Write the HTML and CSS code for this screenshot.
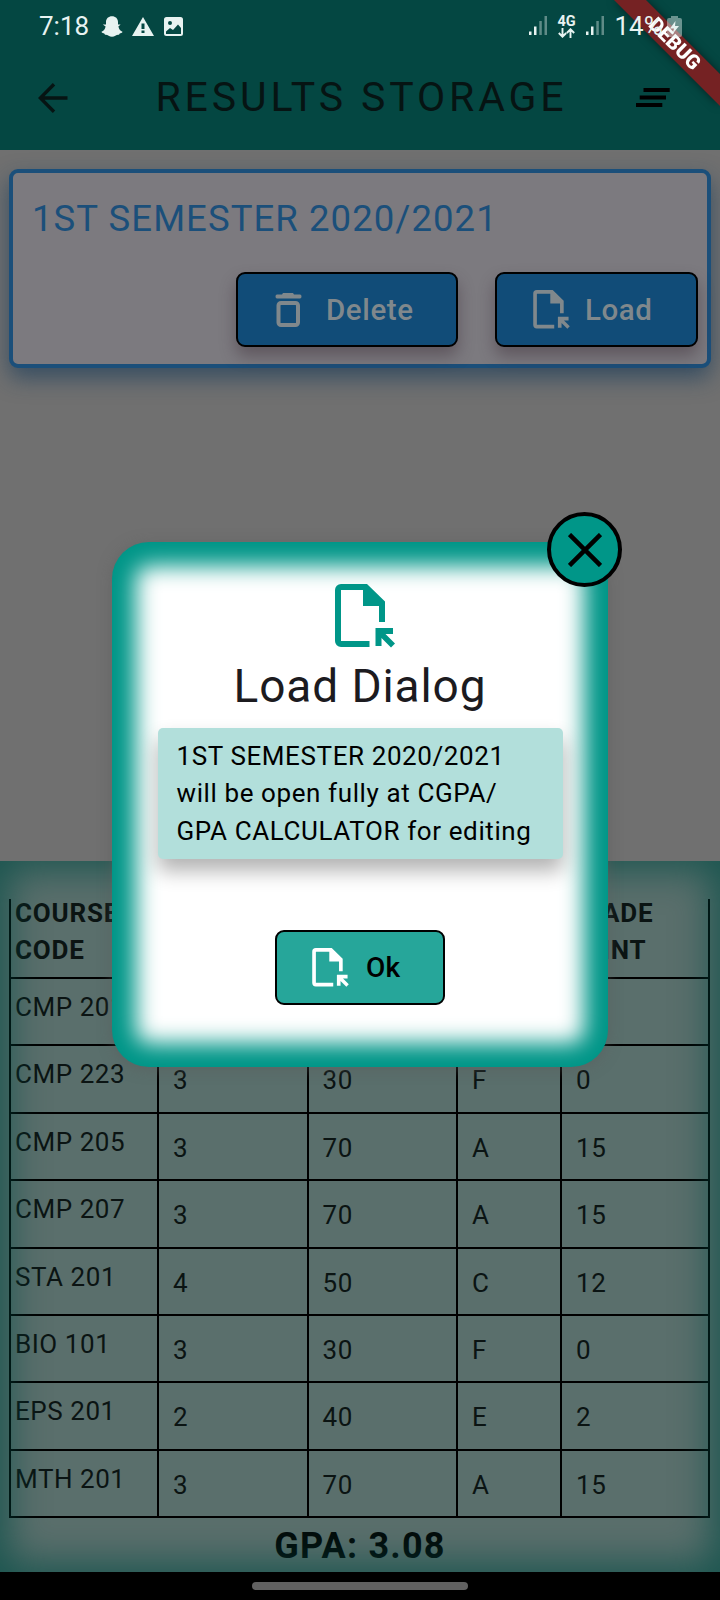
FILE: index.html
```html
<!DOCTYPE html>
<html lang="en">
<head>
<meta charset="utf-8">
<title>Results Storage</title>
<link rel="stylesheet" href="styles.css">
</head>
<body>
<svg class="defs" width="0" height="0">
  <symbol id="file" viewBox="0 0 60 64"><path d="M6 0H32L50 17.5V38H44V22H28V6H6V57H34.5V63H6A6 6 0 0 1 0 57V6A6 6 0 0 1 6 0ZM40.5 44H58V50H50.5L60 59.5L56 63.5L46.500 54V62H40.5Z"/></symbol>
</svg>
<div class="screen">
  <header class="top">
    <div class="status">
      <span class="clock">7:18</span>
      <svg class="snap" width="22" height="21" viewBox="0 0 22 21"><path d="M11 .3C14.500 .3 17 2.600 17 6V8.500L19.600 8.600L17.400 10.500C18 13.500 19.500 15 21.500 15.800C21.500 17 19.500 17.300 18.500 17.700L18 18.800C15.500 18.200 14 20.700 11 20.700S6.500 18.200 4 18.800L3.500 17.700C2.500 17.300.5 17 .5 15.800C2.500 15 4 13.500 4.600 10.500L1.800 8.600L5 8.500V6C5 2.600 7.500 .3 11 .3Z"/></svg>
      <svg class="warn" width="22" height="19" viewBox="0 0 22 19"><path fill-rule="evenodd" d="M11 0L22 19H0ZM9.500 6.500V12H12.500V6.500ZM9.500 13.500V16H12.500V13.500Z"/></svg>
      <svg class="pic" width="19" height="19" viewBox="0 0 19 19"><path fill-rule="evenodd" d="M2.500 0H16.500Q19 0 19 2.500V16.500Q19 19 16.500 19H2.500Q0 19 0 16.500V2.500Q0 0 2.500 0ZM2 14.500V17H17V11L14 7.500L9 13L6 11ZM6 4A2 2 0 1 0 6 8A2 2 0 1 0 6 4Z"/></svg>
      <svg class="signal" width="18" height="20" viewBox="0 0 18 20"><path d="M0 15.500H2.500V19H0ZM5 10.500H7.500V19H5Z"/><path opacity=".4" d="M10.300 5H12.800V19H10.300ZM15.500 0H18V19H15.500Z"/></svg>
      <div class="net"><span>4G</span><svg width="17" height="10" viewBox="0 0 17 10"><path fill="none" stroke="#e8f3f1" stroke-width="1.900" d="M4.500 0V9M.8 5L4.500 8.700L8.200 5M12.500 10V1M8.800 5L12.500 1.300L16.200 5"/></svg></div>
      <svg class="signal" width="18" height="20" viewBox="0 0 18 20"><path d="M0 15.500H2.500V19H0ZM5 10.500H7.500V19H5Z"/><path opacity=".4" d="M10.300 5H12.800V19H10.300ZM15.500 0H18V19H15.500Z"/></svg>
      <span class="percent">14%</span>
      <svg class="battery" width="15" height="21" viewBox="0 0 15 21"><path opacity=".45" d="M4 0H11V2H13Q15 2 15 4V19Q15 21 13 21H2Q0 21 0 19V4Q0 2 2 2H4Z"/><path d="M8.500 5L3 12.500H7L5.500 18L12 10H8Z"/></svg>
    </div>
    <div class="bar">
      <svg width="30" height="30" viewBox="0 0 30 30"><path fill="none" stroke="#061413" stroke-width="3.400" d="M29.500 15H2.500M16 1.300L2.300 15L16 28.700"/></svg>
      <h1>RESULTS STORAGE</h1>
      <svg width="34" height="20" viewBox="0 0 34 20"><path d="M7.500 0H33.700V4H7.500ZM3.700 7.500H30V11.500H3.700ZM0 15H26.300V19H0Z"/></svg>
    </div>
  </header>
  <main class="body">
    <section class="card">
      <h2>1ST SEMESTER 2020/2021</h2>
      <div class="actions">
        <button class="btn del"><svg width="27" height="34" viewBox="0 0 27 34"><path d="M8 0H18L19 1.500H25Q26.500 1.500 26.500 3.500T25 5.500H2Q.5 5.500 .5 3.500T2 1.500H7Z"/><rect x="3.500" y="10" width="19.500" height="22" rx="2.500" fill="none" stroke="#80888c" stroke-width="4"/></svg><span>Delete</span></button>
        <button class="btn load"><svg width="37" height="39"><use href="#file"/></svg><span>Load</span></button>
      </div>
    </section>
  </main>
  <section class="results">
    <div class="grid head"><div>COURSE<br>CODE</div><div></div><div></div><div></div><div>GRADE<br>POINT</div></div>
    <div class="grid"><div>CMP 201</div><div></div><div></div><div></div><div></div></div>
    <div class="grid"><div>CMP 223</div><div>3</div><div>30</div><div>F</div><div>0</div></div>
    <div class="grid"><div>CMP 205</div><div>3</div><div>70</div><div>A</div><div>15</div></div>
    <div class="grid"><div>CMP 207</div><div>3</div><div>70</div><div>A</div><div>15</div></div>
    <div class="grid"><div>STA 201</div><div>4</div><div>50</div><div>C</div><div>12</div></div>
    <div class="grid"><div>BIO 101</div><div>3</div><div>30</div><div>F</div><div>0</div></div>
    <div class="grid"><div>EPS 201</div><div>2</div><div>40</div><div>E</div><div>2</div></div>
    <div class="grid"><div>MTH 201</div><div>3</div><div>70</div><div>A</div><div>15</div></div>
    <p class="gpa">GPA: 3.08</p>
  </section>
  <footer class="nav"><i></i></footer>

  <div class="dialog">
    <svg class="dicon" width="60" height="64"><use href="#file"/></svg>
    <h3>Load Dialog</h3>
    <p class="note">1ST SEMESTER 2020/2021<br>will be open fully at CGPA/<br>GPA CALCULATOR for editing</p>
    <button class="btn ok"><svg width="37" height="39"><use href="#file"/></svg><span>Ok</span></button>
    <button class="close"><svg width="34" height="34" viewBox="0 0 34 34"><path fill="none" stroke="#000" stroke-width="4.500" d="M1.500 1.500L32.500 32.500M32.500 1.500L1.500 32.500"/></svg></button>
  </div>
  <svg class="ribbon" width="120" height="120" viewBox="0 0 120 120"><path d="M14 0H46L120 74V106Z"/><text transform="translate(75 43.500) rotate(45)" x="0" y="7" text-anchor="middle">DEBUG</text></svg>
</div>
</body>
</html>
```
FILE: styles.css
```css
* { box-sizing: border-box; margin: 0; padding: 0; }
body { width: 720px; height: 1600px; overflow: hidden; font-family: Roboto, sans-serif; }
button { font: inherit; border: 0; }
svg { display: block; flex: none; }
.defs { position: absolute; }
.screen { position: relative; width: 720px; height: 1600px; display: flex; flex-direction: column; overflow: hidden; background: #707070; }

.top { height: 150px; background: #044742; }
.status { position: relative; z-index: 2; height: 52px; display: flex; align-items: center; padding-left: 39px; color: #e8f3f1; fill: #e8f3f1; font-size: 26px; }
.clock { width: 61.500px; }
.snap { margin-right: 9px; }
.warn { margin-right: 10px; }
.pic { margin-right: 346px; }
.signal { margin-right: 11px; }
.net { width: 18px; margin-right: 10px; font-size: 14.500px; font-weight: 700; line-height: 13px; }
.percent { width: 51px; white-space: nowrap; }
.battery { margin-left: 1px; }
.bar { height: 92px; display: flex; align-items: center; padding: 0 50px 0 38px; }
.bar h1 { flex: 1; margin: -2px 0 0 87.500px; font-size: 41px; font-weight: 400; letter-spacing: 3.850px; color: #061413; white-space: nowrap; }

.body { height: 711px; padding: 19px 9px 0; }
.card { height: 199px; border: 4px solid #1b4f7a; border-radius: 9px; background: #7c7a7f; padding: 21px 9px 0 19px; box-shadow: 0 10px 22px rgba(24, 60, 90, .65); }
.card h2 { font-size: 36.500px; font-weight: 400; line-height: 50px; letter-spacing: 1.070px; color: #1b4f7a; white-space: nowrap; }
.actions { display: flex; justify-content: flex-end; gap: 37px; margin-top: 28px; }
.btn { height: 75px; display: flex; align-items: center; border: 2px solid #000; border-radius: 9px; font-size: 29.500px; font-weight: 500; letter-spacing: .6px; background: #114c78; color: #80888c; fill: #80888c; box-shadow: 0 9px 16px rgba(60, 45, 55, .45); }
.del { width: 222px; padding-left: 37px; }
.del span { margin-left: 24px; }
.load { width: 203px; padding-left: 36px; }
.load span { margin-left: 15px; }

.results { position: relative; height: 711px; padding: 38px 9px 0; background: #5a6f6c; color: #0b1413; font-size: 26px; line-height: 37.400px; letter-spacing: .55px; }
.results::after { content: ""; position: absolute; inset: 0; box-shadow: inset 0 0 38px 8px rgba(0, 75, 68, .72); }
.grid { display: grid; grid-template-columns: 148px 149.500px 149.500px 104px 150px; height: 67.400px; border-right: 2px solid #000; border-bottom: 2px solid #000; width: 701px; }
.grid div { border-left: 2px solid #000; padding: 16px 0 0 14px; }
.grid div:first-child { padding: 10px 0 0 4px; }
.head { height: 80px; font-weight: 700; line-height: 37px; letter-spacing: .8px; }
.head div, .head div:first-child { padding: 0 0 0 4px; }
.head div::before { content: ""; display: block; margin-top: -4px; }
.gpa { margin-top: 3px; text-align: center; font-size: 36px; font-weight: 700; line-height: 50px; letter-spacing: 1.200px; color: #030b0a; }

.nav { height: 28px; background: #000; display: flex; justify-content: center; padding-top: 10px; }
.nav i { width: 216px; height: 8px; border-radius: 4px; background: #616161; }

.dialog { position: absolute; z-index: 0; left: 112px; top: 542px; width: 496px; height: 525px; border-radius: 37px; background: #009688; box-shadow: 0 2px 14px rgba(90, 90, 90, .5); display: flex; flex-direction: column; align-items: center; padding-top: 42px; }
.dialog::before { content: ""; position: absolute; z-index: -1; inset: 24px; border-radius: 13px; background: #fff; filter: blur(11px); }
.dicon { fill: #009688; margin-left: 9px; }
.dialog h3 { margin-top: 10px; font-size: 46px; font-weight: 400; line-height: 56px; letter-spacing: .9px; color: #1c1b1f; }
.note { width: 405px; height: 131px; margin-top: 14px; padding: 10px 0 0 19px; border-radius: 5px; background: #b2dfdb; font-size: 26px; line-height: 37.400px; letter-spacing: .6px; white-space: nowrap; color: #000; box-shadow: 0 12px 20px rgba(0, 0, 0, .3); }
.ok { width: 170px; margin-top: 71px; padding-left: 35px; background: #26a69a; color: #000; fill: #fff; box-shadow: none; font-size: 28px; letter-spacing: .2px; }
.ok span { margin-left: 17px; }
.close { position: absolute; left: 435px; top: -30px; width: 75px; height: 75px; border: 4px solid #000; border-radius: 50%; background: #009688; display: flex; align-items: center; justify-content: center; }

.ribbon { position: absolute; left: 600px; top: 0; filter: drop-shadow(0 0 4px rgba(0, 0, 0, .5)); }
.ribbon path { fill: #752223; }
.ribbon text { font-size: 20px; font-weight: 900; fill: #fff; }
```
